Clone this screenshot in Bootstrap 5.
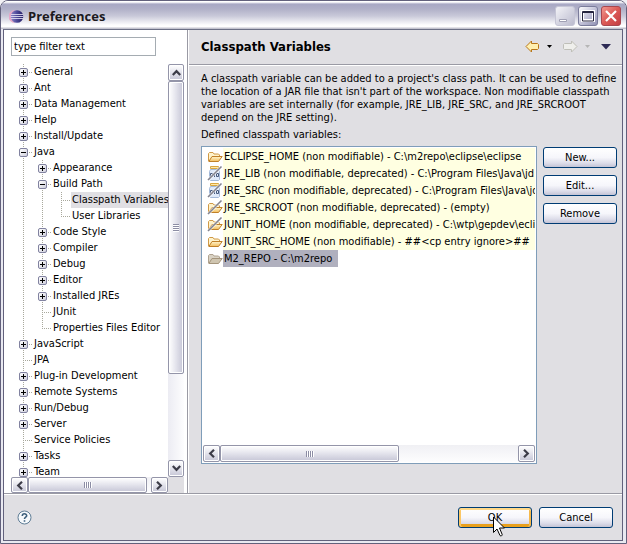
<!DOCTYPE html>
<html lang="en">
<head>
<meta charset="utf-8">
<meta name="viewport" content="width=device-width, initial-scale=1">
<title>Preferences</title>
<link rel="stylesheet" href="https://cdn.jsdelivr.net/npm/bootstrap@5.3.0/dist/css/bootstrap.min.css">
<style>
:root { --face: #e0dfe3; --ink: #000; --line: #9a9aa4; --frame: #62617c; }
body { font: 11px/16px "DejaVu Sans Condensed", "DejaVu Sans", sans-serif; color: var(--ink); background: #f2f1f5; }
button { font: inherit; color: inherit; padding: 0; }
svg { display: block; flex: none; }

.win { background: #e9e9f1; border: 1px solid var(--frame); border-radius: 8px 8px 0 0; padding: 0 3px 2px 2px; }
.titlebar { height: 28px; padding: 3px 2px 0 4px; margin: 0 -3px 0 -2px; padding-right: 5px; border-radius: 7px 7px 0 0;
  background: linear-gradient(#fff 0 1px, #d9d9e6 2px, #a8a8c4 3px, #b0b0c8 8px, #c9c9d9 15px, #fdfdfe 24px, #fff 26px, #c4c4cf 27px); }
.titlebar h1 { font: bold 13px/18px "Open Sans", sans-serif; color: #1c1a1e; }
.cap-group { gap: 3px; }
.capbtn { width: 20px; height: 20px; border: 0; background: none; }
.client { border: 1px solid var(--frame); border-color: #6c7086 var(--frame) var(--frame); background: var(--face); }

.nav-pane { flex: 0 0 184px; background: #fff; padding: 7px 3px 0 7px; border-right: 1px solid var(--line); }
.filter { width: 145px; height: 19px; border: 1px solid #a5acb2; border-radius: 0; padding: 0 2px; font: inherit; color: inherit; background: #fff; }
.tree-grid { display: grid; grid-template: minmax(0, 1fr) 16px / minmax(0, 1fr) 16px; margin-top: 8px; }
.tree-view { min-height: 0; padding-left: 3px; }
.tree-corner { background: var(--face); }

/* Tree connectors: one dotted column per list item, one dotted stub per row */
.tree li { background: repeating-linear-gradient(#a8a89c 0 1px, transparent 1px 2px) 9px 0 / 1px 100% no-repeat; }
.tree ul li:last-child { background-size: 1px 9px; }
.tree ul { padding-left: 19px; }
.tree-row { display: flex; height: 16px; white-space: nowrap;
  background: repeating-linear-gradient(90deg, #a8a89c 0 1px, transparent 1px 2px) 11px 8px / 7px 1px no-repeat; }
.tree-row a { color: inherit; text-decoration: none; padding-left: 1px; margin-left: 19px; }
.tree-row a.current { background: var(--face); flex-grow: 1; }
.twist { width: 9px; height: 9px; margin: 4px 0 0 5px; border: 1px solid #8182a0; border-radius: 2px; flex: none;
  background: linear-gradient(#000, #000) center / 5px 1px no-repeat, linear-gradient(135deg, #fff, #cfcfdc); }
.twist[aria-expanded="false"] { background: linear-gradient(#000, #000) center / 5px 1px no-repeat, linear-gradient(#000, #000) center / 1px 5px no-repeat, linear-gradient(135deg, #fff, #cfcfdc); }
.tree-row .twist + a { margin-left: 5px; }

.sb { display: flex; background: linear-gradient(#f0f0f4, #fdfdfe); }
.sb-v { flex-direction: column; background: linear-gradient(90deg, #ececf3, #fdfdfe); }
.sb-btn, .sb-thumb { border: 1px solid #9495a9; border-radius: 2px; box-shadow: inset 0 0 0 1px #fff;
  background: linear-gradient(#fff, #e6e6ee 45%, #c6c6d6); display: flex; align-items: center; justify-content: center; }
.sb-btn { flex: 0 0 17px; }
.sb-v .sb-thumb { background: linear-gradient(90deg, #fff, #e6e6ee 45%, #c6c6d6); flex: 0 0 71%; }
.nav-h .sb-thumb { flex: 0 0 76%; }
.list-h .sb-thumb { flex: 0 0 54%; }
.grip { width: 8px; height: 6px; background: repeating-linear-gradient(90deg, #8c8da4 0 1px, #fff 1px 2px); }
.sb-v .grip { width: 6px; height: 8px; background: repeating-linear-gradient(#8c8da4 0 1px, #fff 1px 2px); }

.page { border-left: 1px solid #fff; }
.page-head { height: 35px; padding: 0 11px 0 12px; border-bottom: 1px solid var(--line); }
.page-head h2 { font: bold 13px/18px "DejaVu Sans Condensed", "DejaVu Sans", sans-serif; }
.page-body { border-top: 1px solid #fff; padding: 6px 5px 29px 12px; }
.about { line-height: 13px; margin: 0 0 4px; }
.caption-line { line-height: 14px; margin-bottom: 4px; }
.split { gap: 6px; }
.side-actions { gap: 7px; padding-top: 1px; }
.vars { border: 1px solid #7f9db9; background: #fff; padding: 1px; }
.var-row { display: flex; height: 17px; line-height: 18px; padding-left: 4px; white-space: nowrap; }
.var-row span { background: #ffffe1; flex-grow: 1; padding-left: 1px; }
.var-row[aria-selected="true"] span { background: #b0b0be; flex-grow: 0; padding-right: 6px; }

.xp { width: 74px; height: 21px; border: 1px solid #003c74; border-radius: 3px; line-height: 17px; text-align: center;
  background: linear-gradient(#fff, #f6f6fb 50%, #dcdce9 80%, #c3c3d5); }
.xp-default { box-shadow: inset 0 2px #ffd98a, inset 2px 0 #fbc766, inset -2px 0 #f6b94c, inset 0 -3px #e8a01e; }
.foot { border-top: 1px solid var(--line); box-shadow: inset 0 1px #fff; height: 47px; padding: 1px 9px 0 13px; }
.foot-actions { gap: 7px; }
.tool { border: 0; background: none; }
.history { margin: 0 11px 0 7px; }
.pointer { position: absolute; left: 35px; top: 9px; pointer-events: none; }
</style>
<script src="https://cdn.jsdelivr.net/npm/bootstrap@5.3.0/dist/js/bootstrap.bundle.min.js"></script>
</head>
<body>
<svg width="0" height="0" class="position-absolute" aria-hidden="true">
  <defs>
    <linearGradient id="gold" x1="0" y1="0" x2="0" y2="1"><stop offset="0" stop-color="#fff6cf"/><stop offset="1" stop-color="#f3bd5c"/></linearGradient>
    <linearGradient id="orb" x1="0" y1="0" x2="1" y2="0"><stop offset="0" stop-color="#8d86c6"/><stop offset=".5" stop-color="#4b4797"/><stop offset="1" stop-color="#231c62"/></linearGradient>
    <linearGradient id="steel" x1="0" y1="0" x2="1" y2="1"><stop offset="0" stop-color="#fff"/><stop offset=".5" stop-color="#c3c3d9"/><stop offset="1" stop-color="#8f90b2"/></linearGradient>
    <linearGradient id="pale" x1="0" y1="0" x2="1" y2="1"><stop offset="0" stop-color="#f4f4f8"/><stop offset="1" stop-color="#b9b9cd"/></linearGradient>
    <linearGradient id="red" x1="0" y1="0" x2="1" y2="1"><stop offset="0" stop-color="#f29a92"/><stop offset=".5" stop-color="#dc5a56"/><stop offset="1" stop-color="#c23c42"/></linearGradient>
    <symbol id="folder" viewBox="0 0 16 17">
      <path d="M1.500 13V5.500l1-1h3.500l1 1.500h4.500l1 1v2" fill="#fff3cb" stroke="#d09a48"/>
      <path d="M1.800 13.500L5 8.500h10.200L11.500 13.500z" fill="url(#gold)" stroke="#c08028"/>
    </symbol>
    <symbol id="folder-dim" viewBox="0 0 16 17">
      <path d="M1.500 13V5.500l1-1h3.500l1 1.500h4.500l1 1v2" fill="#d9d2c4" stroke="#b0a390"/>
      <path d="M1.800 13.500L5 8.500h10.200L11.500 13.500z" fill="#cfc5b0" stroke="#a5957c"/>
    </symbol>
    <symbol id="slash" viewBox="0 0 16 17"><path d="M1 15L14.500 1.500" stroke="#fff" stroke-opacity=".7" stroke-width="3"/><path d="M1 15L14.500 1.500" stroke="#84848f" stroke-width="1.600"/></symbol>
    <symbol id="jar" viewBox="0 0 16 17">
      <path d="M3.500 1.500h8v2h-8z" fill="#ffe9a8" stroke="#d9a640"/>
      <path d="M3.500 4.500h8l1 2v8l-1 1h-8l-1-1v-8z" fill="#dfeafa" stroke="#a4b9d8"/>
      <path d="M3.500 8.500h2v3h-2zM7.500 8v4M9.500 8.500h2v3h-2z" fill="none" stroke="#46597c"/>
    </symbol>
  </defs>
</svg>

<div class="win vh-100 d-flex flex-column">
  <header class="titlebar d-flex align-items-center">
    <svg class="ms-1" width="15" height="15" viewBox="0 0 15 15" aria-hidden="true">
      <path d="M6 1a6.500 6.500 0 0 0 0 13C2.500 11.500 2.500 3.500 6 1z" fill="#e6a8c8"/>
      <circle cx="8" cy="7.500" r="6.300" fill="url(#orb)"/>
      <path d="M2 5.500h12M1.500 7.500h13M2 9.500h12" stroke="#e5e3f5" stroke-opacity=".85"/>
    </svg>
    <h1 class="mb-0 ms-1 flex-grow-1">Preferences</h1>
    <div class="cap-group d-flex">
      <button class="capbtn" type="button" aria-label="Minimize"><svg width="20" height="20"><rect x=".5" y=".5" width="19" height="19" rx="2.500" fill="url(#pale)" stroke="#c5c5d5"/><path d="M4.500 13.500h7v2h-7z" fill="#fff" stroke="#a0a0b4"/></svg></button>
      <button class="capbtn" type="button" aria-label="Maximize"><svg width="20" height="20"><rect x=".5" y=".5" width="19" height="19" rx="2.500" fill="url(#steel)" stroke="#7a7b9b"/><path d="M4.500 5.500h11v9h-11z" fill="none" stroke="#fff" stroke-width="3"/><path d="M4.500 5.500h11v9.500h-11zM4 6.500h12" fill="none" stroke="#26253f"/></svg></button>
      <button class="capbtn" type="button" aria-label="Close"><svg width="20" height="20"><rect x=".5" y=".5" width="19" height="19" rx="2.500" fill="url(#red)" stroke="#a8474f"/><path d="M5 5l10 10M15 5L5 15" stroke="#fff" stroke-width="2.200"/></svg></button>
    </div>
  </header>

  <div class="client flex-grow-1 d-flex flex-column overflow-hidden">
    <main class="d-flex flex-grow-1 overflow-hidden">
      <nav class="nav-pane d-flex flex-column" aria-label="Preference pages">
        <input class="filter" type="text" value="type filter text" aria-label="Filter">
        <div class="tree-grid flex-grow-1 overflow-hidden">
          <div class="tree-view overflow-hidden">
            <ul class="tree list-unstyled mb-0">
              <li><div class="tree-row"><button class="twist" aria-expanded="false" aria-label="Expand General"></button><a href="#">General</a></div></li>
              <li><div class="tree-row"><button class="twist" aria-expanded="false" aria-label="Expand Ant"></button><a href="#">Ant</a></div></li>
              <li><div class="tree-row"><button class="twist" aria-expanded="false" aria-label="Expand Data Management"></button><a href="#">Data Management</a></div></li>
              <li><div class="tree-row"><button class="twist" aria-expanded="false" aria-label="Expand Help"></button><a href="#">Help</a></div></li>
              <li><div class="tree-row"><button class="twist" aria-expanded="false" aria-label="Expand Install/Update"></button><a href="#">Install/Update</a></div></li>
              <li><div class="tree-row"><button class="twist" aria-expanded="true" aria-label="Collapse Java"></button><a href="#">Java</a></div>
                <ul class="list-unstyled">
                  <li><div class="tree-row"><button class="twist" aria-expanded="false" aria-label="Expand Appearance"></button><a href="#">Appearance</a></div></li>
                  <li><div class="tree-row"><button class="twist" aria-expanded="true" aria-label="Collapse Build Path"></button><a href="#">Build Path</a></div>
                    <ul class="list-unstyled">
                      <li><div class="tree-row"><a class="current" href="#" aria-current="page">Classpath Variables</a></div></li>
                      <li><div class="tree-row"><a href="#">User Libraries</a></div></li>
                    </ul>
                  </li>
                  <li><div class="tree-row"><button class="twist" aria-expanded="false" aria-label="Expand Code Style"></button><a href="#">Code Style</a></div></li>
                  <li><div class="tree-row"><button class="twist" aria-expanded="false" aria-label="Expand Compiler"></button><a href="#">Compiler</a></div></li>
                  <li><div class="tree-row"><button class="twist" aria-expanded="false" aria-label="Expand Debug"></button><a href="#">Debug</a></div></li>
                  <li><div class="tree-row"><button class="twist" aria-expanded="false" aria-label="Expand Editor"></button><a href="#">Editor</a></div></li>
                  <li><div class="tree-row"><button class="twist" aria-expanded="false" aria-label="Expand Installed JREs"></button><a href="#">Installed JREs</a></div></li>
                  <li><div class="tree-row"><a href="#">JUnit</a></div></li>
                  <li><div class="tree-row"><a href="#">Properties Files Editor</a></div></li>
                </ul>
              </li>
              <li><div class="tree-row"><button class="twist" aria-expanded="false" aria-label="Expand JavaScript"></button><a href="#">JavaScript</a></div></li>
              <li><div class="tree-row"><a href="#">JPA</a></div></li>
              <li><div class="tree-row"><button class="twist" aria-expanded="false" aria-label="Expand Plug-in Development"></button><a href="#">Plug-in Development</a></div></li>
              <li><div class="tree-row"><button class="twist" aria-expanded="false" aria-label="Expand Remote Systems"></button><a href="#">Remote Systems</a></div></li>
              <li><div class="tree-row"><button class="twist" aria-expanded="false" aria-label="Expand Run/Debug"></button><a href="#">Run/Debug</a></div></li>
              <li><div class="tree-row"><button class="twist" aria-expanded="false" aria-label="Expand Server"></button><a href="#">Server</a></div></li>
              <li><div class="tree-row"><a href="#">Service Policies</a></div></li>
              <li><div class="tree-row"><button class="twist" aria-expanded="false" aria-label="Expand Tasks"></button><a href="#">Tasks</a></div></li>
              <li><div class="tree-row"><button class="twist" aria-expanded="false" aria-label="Expand Team"></button><a href="#">Team</a></div></li>
            </ul>
          </div>
          <div class="sb sb-v">
            <button class="sb-btn" aria-label="Scroll up"><svg width="9" height="7"><path d="M.8 6L4.500 2.200 8.200 6" fill="none" stroke="#3c3c48" stroke-width="2.200"/></svg></button>
            <div class="sb-thumb"><span class="grip"></span></div>
            <div class="flex-grow-1"></div>
            <button class="sb-btn" aria-label="Scroll down"><svg width="9" height="7"><path d="M.8 1L4.500 4.800 8.200 1" fill="none" stroke="#3c3c48" stroke-width="2.200"/></svg></button>
          </div>
          <div class="sb nav-h">
            <button class="sb-btn" aria-label="Scroll left"><svg width="7" height="9"><path d="M6 .8L2.200 4.500 6 8.200" fill="none" stroke="#3c3c48" stroke-width="2.200"/></svg></button>
            <div class="sb-thumb"><span class="grip"></span></div>
            <div class="flex-grow-1"></div>
            <button class="sb-btn" aria-label="Scroll right"><svg width="7" height="9"><path d="M1 .8L4.800 4.500 1 8.200" fill="none" stroke="#3c3c48" stroke-width="2.200"/></svg></button>
          </div>
          <div class="tree-corner"></div>
        </div>
      </nav>

      <section class="page flex-grow-1 d-flex flex-column overflow-hidden">
        <div class="page-head d-flex align-items-center">
          <h2 class="mb-0 flex-grow-1">Classpath Variables</h2>
          <button class="tool" type="button" aria-label="Back"><svg width="15" height="13"><path d="M1 6.500L6.500 1v2.500h6l1 1v4l-1 1h-6V12z" fill="#fff0b0" stroke="#b8761a"/></svg></button>
          <button class="tool history" type="button" aria-label="Back history"><svg width="5" height="3"><path d="M0 0h5L2.500 3z"/></svg></button>
          <button class="tool" type="button" aria-label="Forward" disabled><svg width="15" height="13"><path d="M14 6.500L8.500 1v2.500h-7l-1 1v4l1 1h7V12z" fill="#efefec" stroke="#bfbfb8"/></svg></button>
          <button class="tool history" type="button" aria-label="Forward history" disabled><svg width="5" height="3"><path d="M0 0h5L2.500 3z" fill="#b5b5b5"/></svg></button>
          <button class="tool" type="button" aria-label="Menu"><svg width="10" height="6"><path d="M0 0h10L5 5.500z" fill="#2d2a55"/></svg></button>
        </div>
        <div class="page-body flex-grow-1 d-flex flex-column overflow-hidden">
          <p class="about">A classpath variable can be added to a project's class path. It can be used to define the location of a JAR file that isn't part of the workspace. Non modifiable classpath variables are set internally (for example, JRE_LIB, JRE_SRC, and JRE_SRCROOT depend on the JRE setting).</p>
          <div class="caption-line" id="vars-label">Defined classpath variables:</div>
          <div class="split d-flex flex-grow-1 overflow-hidden">
            <div class="vars flex-grow-1 d-flex flex-column overflow-hidden">
              <ul class="list-unstyled mb-0 flex-grow-1 overflow-hidden" role="listbox" aria-labelledby="vars-label">
                <li class="var-row" role="option" aria-selected="false"><svg width="16" height="17"><use href="#folder"/></svg><span>ECLIPSE_HOME (non modifiable) - C:\m2repo\eclipse\eclipse</span></li>
                <li class="var-row" role="option" aria-selected="false"><svg width="16" height="17"><use href="#jar"/><use href="#slash"/></svg><span>JRE_LIB (non modifiable, deprecated) - C:\Program Files\Java\jd</span></li>
                <li class="var-row" role="option" aria-selected="false"><svg width="16" height="17"><use href="#jar"/><use href="#slash"/></svg><span>JRE_SRC (non modifiable, deprecated) - C:\Program Files\Java\jd</span></li>
                <li class="var-row" role="option" aria-selected="false"><svg width="16" height="17"><use href="#folder"/><use href="#slash"/></svg><span>JRE_SRCROOT (non modifiable, deprecated) - (empty)</span></li>
                <li class="var-row" role="option" aria-selected="false"><svg width="16" height="17"><use href="#folder"/><use href="#slash"/></svg><span>JUNIT_HOME (non modifiable, deprecated) - C:\wtp\gepdev\eclip</span></li>
                <li class="var-row" role="option" aria-selected="false"><svg width="16" height="17"><use href="#folder"/></svg><span>JUNIT_SRC_HOME (non modifiable) - ##&lt;cp entry ignore&gt;##</span></li>
                <li class="var-row" role="option" aria-selected="true"><svg width="16" height="17"><use href="#folder-dim"/></svg><span>M2_REPO - C:\m2repo</span></li>
              </ul>
              <div class="sb list-h">
                <button class="sb-btn" aria-label="Scroll left"><svg width="7" height="15" viewBox="0 -3 7 15"><path d="M6 .8L2.200 4.500 6 8.200" fill="none" stroke="#3c3c48" stroke-width="2.200"/></svg></button>
                <div class="sb-thumb"><span class="grip"></span></div>
                <div class="flex-grow-1"></div>
                <button class="sb-btn" aria-label="Scroll right"><svg width="7" height="9"><path d="M1 .8L4.800 4.500 1 8.200" fill="none" stroke="#3c3c48" stroke-width="2.200"/></svg></button>
              </div>
            </div>
            <div class="side-actions d-flex flex-column">
              <button class="xp" type="button">New...</button>
              <button class="xp" type="button">Edit...</button>
              <button class="xp" type="button">Remove</button>
            </div>
          </div>
        </div>
      </section>
    </main>

    <footer class="foot d-flex align-items-center">
      <button class="tool me-auto" type="button" aria-label="Help"><svg width="15" height="15"><circle cx="7.500" cy="7.500" r="6.500" fill="#f6f9fc" stroke="#5f7d96"/><path d="M5.300 6c0-3 4.400-2.800 4.400-.3 0 1.500-2.200 1.500-2.200 3.300M7.500 10.300v1.500" fill="none" stroke="#3d5f7c" stroke-width="1.600"/></svg></button>
      <div class="foot-actions d-flex">
        <div class="position-relative">
          <button class="xp xp-default" type="button">OK</button>
          <svg class="pointer" width="13" height="21" aria-hidden="true"><path d="M.5 1v15.500l3.500-3.500 3 6.500c1 1 2.500 0 2.200-1L6.500 12h5z" fill="#fff" stroke="#000"/></svg>
        </div>
        <button class="xp" type="button">Cancel</button>
      </div>
    </footer>
  </div>
</div>
</body>
</html>
